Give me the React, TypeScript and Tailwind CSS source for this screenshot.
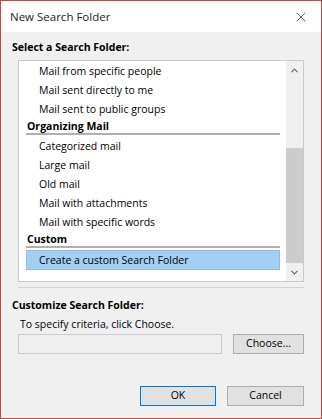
import React from 'react';
import { ChevronUp, ChevronDown, X } from 'lucide-react';

const font = { fontFamily: '"Open Sans", "Noto Sans", Arial, sans-serif' };

type Row = { label: string; header?: boolean; selected?: boolean };

const rows: Row[] = [
  { label: 'Mail from specific people' },
  { label: 'Mail sent directly to me' },
  { label: 'Mail sent to public groups' },
  { label: 'Organizing Mail', header: true },
  { label: 'Categorized mail' },
  { label: 'Large mail' },
  { label: 'Old mail' },
  { label: 'Mail with attachments' },
  { label: 'Mail with specific words' },
  { label: 'Custom', header: true },
  { label: 'Create a custom Search Folder', selected: true },
];

export default function App() {
  return (
    <div
      className="w-[322px] h-[419px] flex flex-col border border-[#c94545] text-[10.5px] text-black bg-[#f0f0f0]"
      style={font}
    >
      {/* Title bar */}
      <div className="h-[31px] bg-white flex items-center justify-between pl-[9px] pr-[12px]">
        <span className="text-[11.5px] text-[#222]">New Search Folder</span>
        <X size={16} strokeWidth={1.2} className="text-[#333]" />
      </div>

      <div className="flex-1 flex flex-col px-[11px]">
        <div className="pt-[6px] h-[25px] leading-[19px] font-bold">Select a Search Folder:</div>

        {/* List box */}
        <div className="mt-[3px] mx-[6px] h-[222px] bg-white border border-[#c9c9c9] flex">
          <div className="flex-1 flex flex-col pl-[7px] pr-[6px] pt-[1px]">
            {rows.map(r =>
              r.header ? (
                <div key={r.label} className="h-[18px] flex flex-col">
                  <div className="h-[14px] leading-[14px] pl-[1px] font-bold">{r.label}</div>
                  <div className="h-[2px] bg-[#b0b0b0]" />
                </div>
              ) : r.selected ? (
                <div key={r.label} className="h-[20px] leading-[18px] pl-[12px] bg-[#a3cff3] border border-[#8cbde8]">
                  {r.label}
                </div>
              ) : (
                <div key={r.label} className="h-[19px] leading-[19px] pl-[13px]">
                  {r.label}
                </div>
              )
            )}
          </div>
          {/* Scrollbar */}
          <div className="w-[17px] bg-[#f0f0f0] flex flex-col items-center">
            <div className="h-[19px] flex items-center justify-center">
              <ChevronUp size={11} strokeWidth={2.4} className="text-[#606060]" />
            </div>
            <div className="h-[68px]" />
            <div className="w-[17px] h-[115px] bg-[#cdcdcd]" />
            <div className="h-[18px] flex items-center justify-center">
              <ChevronDown size={11} strokeWidth={2.4} className="text-[#606060]" />
            </div>
          </div>
        </div>

        <div className="mt-[5px] mx-[6px] h-[1px] bg-[#d2d2d2]" />

        <div className="mt-[8px] h-[19px] leading-[19px] font-bold">Customize Search Folder:</div>
        <div className="h-[19px] leading-[19px] pl-[8px]">To specify criteria, click Choose.</div>

        <div className="mx-[6px] flex gap-[11px]">
          <div className="w-[204px] h-[20px] bg-[#f0f0f0] border border-[#cccccc]" />
          <div className="flex-1 h-[20px] bg-[#e1e1e1] border border-[#adadad] flex items-center justify-center">
            Choose...
          </div>
        </div>

        <div className="mt-[32px] mx-[6px] flex justify-end gap-[11px]">
          <div className="w-[76px] h-[20px] bg-[#e1e1e1] border border-[#0078d7] flex items-center justify-center">
            OK
          </div>
          <div className="w-[77px] h-[20px] bg-[#e1e1e1] border border-[#adadad] flex items-center justify-center">
            Cancel
          </div>
        </div>
      </div>
    </div>
  );
}
